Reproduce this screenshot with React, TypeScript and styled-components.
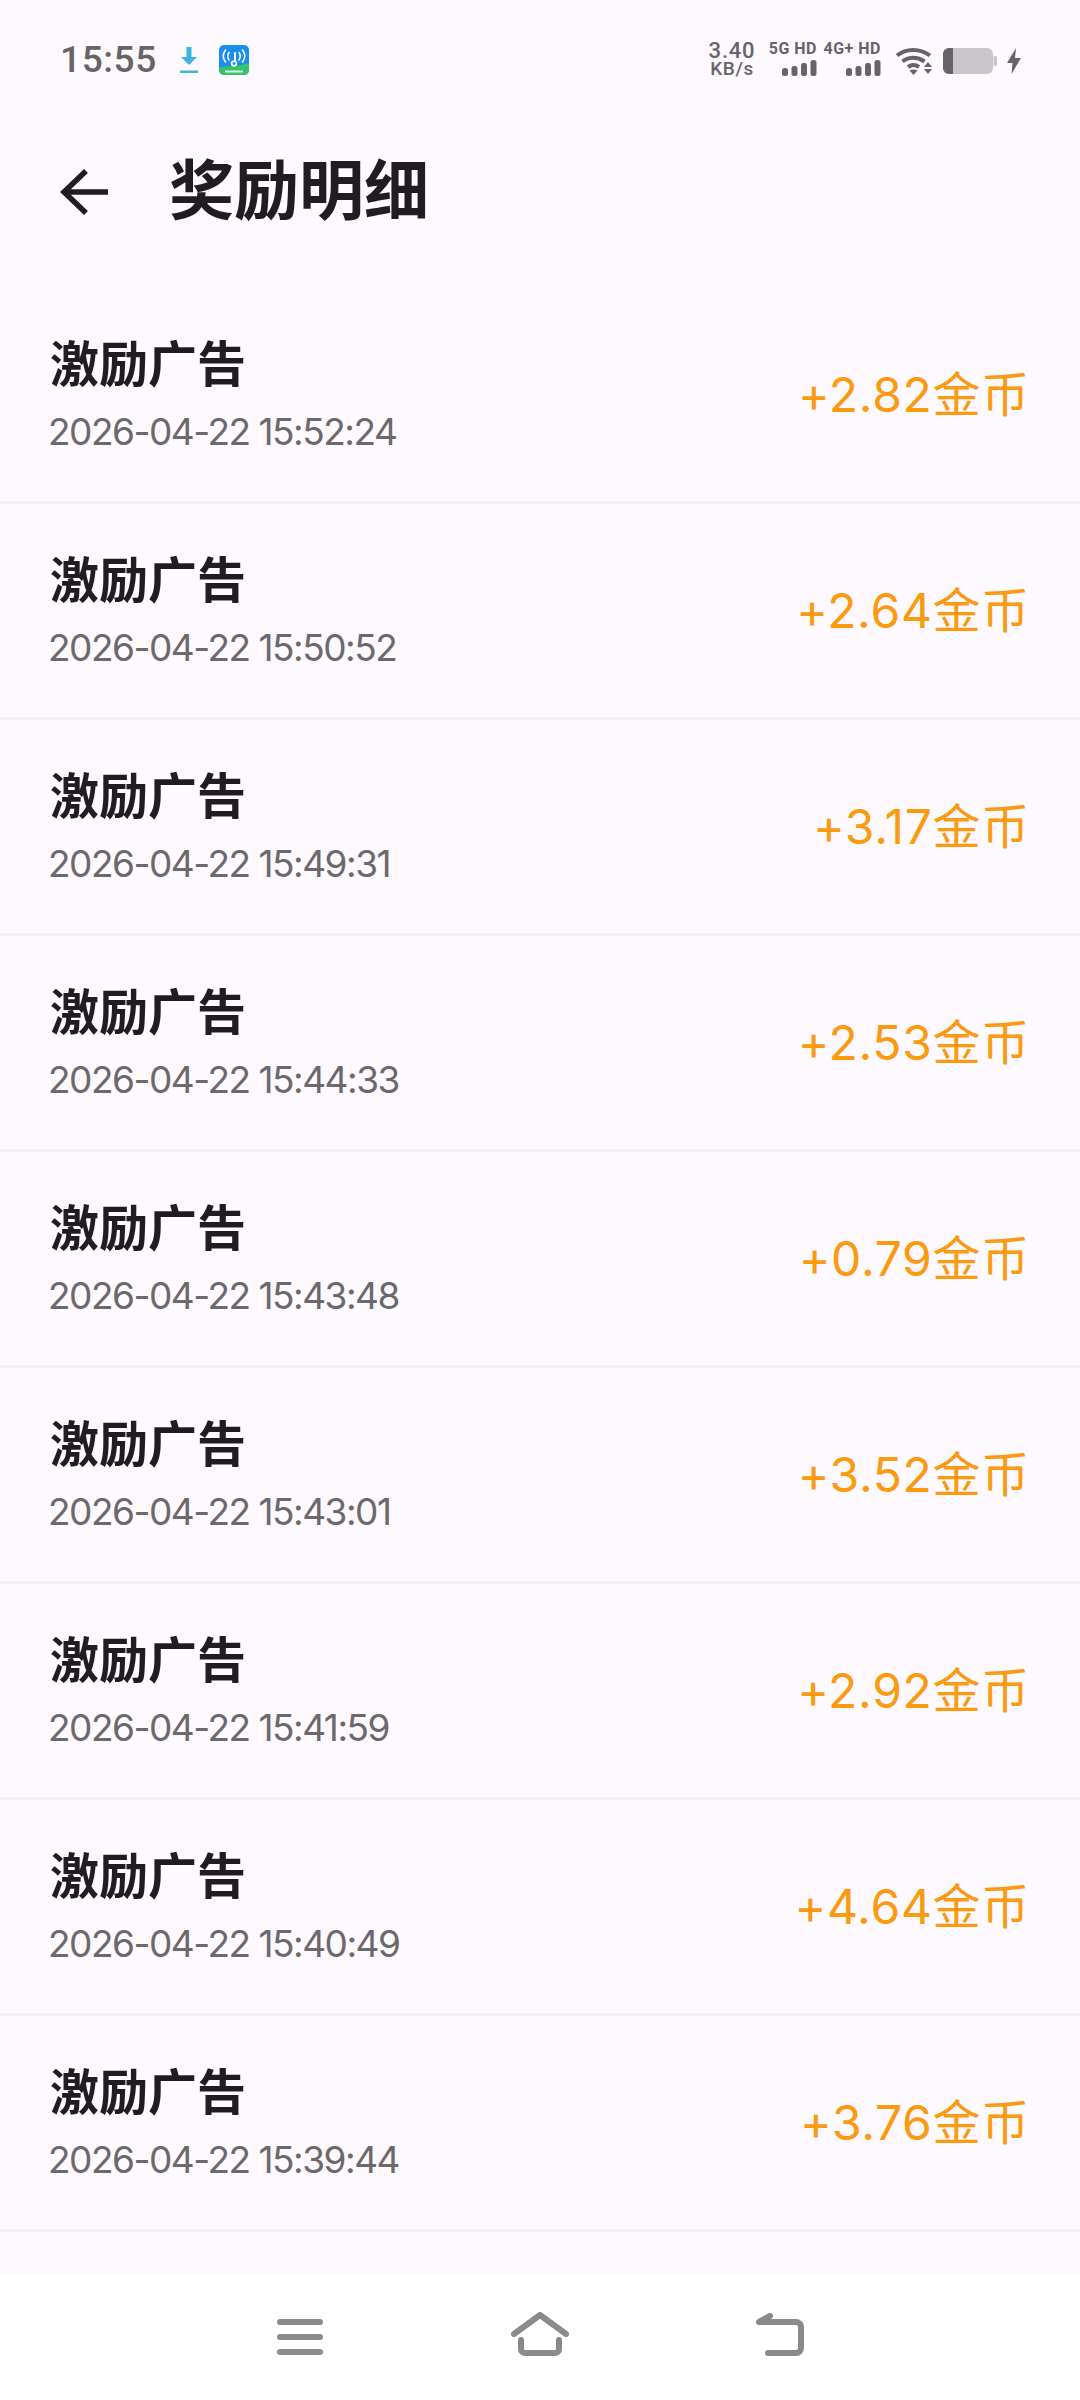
import React from "react";
import styled, { createGlobalStyle } from "styled-components";

const cjk = `Roboto, "Noto Sans CJK SC", sans-serif`;
const numeric = `Inter, "Noto Sans CJK SC", sans-serif`;

const GlobalStyle = createGlobalStyle`
  html, body {
    margin: 0;
    padding: 0;
    background: #fef8ff;
  }
  * {
    box-sizing: border-box;
  }
`;

const Page = styled.div`
  width: 1080px;
  height: 2400px;
  display: flex;
  flex-direction: column;
  overflow: hidden;
  background: #fef8ff;
  font-family: ${cjk};
`;

const StatusBar = styled.div`
  height: 80px;
  padding: 40px 59px 0 60px;
  display: flex;
  align-items: flex-start;
  justify-content: space-between;
  color: #666467;
`;

const StatusLeft = styled.div`
  display: flex;
  align-items: center;
  height: 40px;
`;

const Clock = styled.span`
  font-size: 37px;
  font-weight: 500;
  line-height: 40px;
  letter-spacing: 0.6px;
  margin-right: 22px;
`;

const StatusRight = styled.div`
  display: flex;
  align-items: flex-start;
  height: 40px;
`;

const Speed = styled.div`
  width: 50px;
  margin-top: 1px;
  margin-right: 12px;
  display: flex;
  flex-direction: column;
  align-items: center;
`;

const SpeedValue = styled.span`
  font-size: 22px;
  font-weight: 500;
  line-height: 20px;
  letter-spacing: 0.8px;
`;

const SpeedUnit = styled.span`
  font-size: 19px;
  font-weight: 500;
  line-height: 16px;
  letter-spacing: 0.6px;
`;

const Network = styled.div<{ $width: number; $after: number }>`
  width: ${(p) => p.$width}px;
  margin-right: ${(p) => p.$after}px;
  display: flex;
  flex-direction: column;
  align-items: flex-end;
  gap: 3px;
`;

const NetworkLabel = styled.span`
  font-size: 16px;
  font-weight: 700;
  line-height: 17px;
  letter-spacing: 0.5px;
  white-space: nowrap;
`;

const Header = styled.div`
  height: 126px;
  margin-top: 49px;
  padding: 0 0 0 60px;
  display: flex;
  align-items: center;
  gap: 61px;
  color: #1f1d20;
`;

const Title = styled.h1`
  margin: 0;
  font-size: 65px;
  font-weight: 700;
  line-height: 72px;
  color: #1f1d20;
`;

const List = styled.div`
  flex: 1;
  margin-top: 33px;
  overflow: hidden;
`;

const Row = styled.div`
  height: 216px;
  padding: 0 50px 0 48px;
  display: flex;
  align-items: center;
  justify-content: space-between;
  border-bottom: 3px solid #f3f1f4;
`;

const RowText = styled.div`
  padding-top: 2px;
  display: flex;
  flex-direction: column;
  gap: 15px;
`;

const RowTitle = styled.div`
  margin-left: 2px;
  font-size: 49px;
  font-weight: 700;
  line-height: 58px;
  color: #1f1d20;
`;

const RowTime = styled.div`
  font-family: ${numeric};
  font-size: 37px;
  line-height: 44px;
  letter-spacing: -1.5px;
  color: #6b696c;
`;

const Amount = styled.div`
  font-family: ${numeric};
  font-size: 48px;
  line-height: 56px;
  letter-spacing: 0.7px;
  color: #fb9a0e;
`;

const BottomNav = styled.div`
  height: 126px;
  padding: 45px 0 0;
  background: #ffffff;
  display: flex;
  justify-content: center;
  align-items: flex-start;
  color: #8a8a8a;
`;

const NavSlot = styled.div`
  width: 240px;
  display: flex;
  justify-content: center;
`;

const records = [
  { time: "2026-04-22 15:52:24", amount: "+2.82" },
  { time: "2026-04-22 15:50:52", amount: "+2.64" },
  { time: "2026-04-22 15:49:31", amount: "+3.17" },
  { time: "2026-04-22 15:44:33", amount: "+2.53" },
  { time: "2026-04-22 15:43:48", amount: "+0.79" },
  { time: "2026-04-22 15:43:01", amount: "+3.52" },
  { time: "2026-04-22 15:41:59", amount: "+2.92" },
  { time: "2026-04-22 15:40:49", amount: "+4.64" },
  { time: "2026-04-22 15:39:44", amount: "+3.76" },
];

const DownloadIcon = () => (
  <svg width="20" height="28" viewBox="0 0 20 28" style={{ marginRight: 20 }}>
    <path d="M7.5 1h5v10h5.500L10 19 2 11h5.500z" fill="#3bb4e0" />
    <rect x="1" y="24.500" width="18" height="2.500" fill="#3bb4e0" />
  </svg>
);

const AppIcon = () => (
  <svg width="30" height="30" viewBox="0 0 30 30">
    <defs>
      <clipPath id="appClip">
        <rect width="30" height="30" rx="5" />
      </clipPath>
    </defs>
    <g clipPath="url(#appClip)">
      <rect width="30" height="30" fill="#1a8df0" />
      <path d="M0 23c8-3 20-1 30-5v12H0z" fill="#36c46a" />
      <g fill="none" stroke="#fff" strokeWidth="1.600" strokeLinecap="round">
        <path d="M6.500 5c-3 4-3 8 0 12M23.500 5c3 4 3 8 0 12" />
        <path d="M10 7.500c-1.700 2.500-1.700 5 0 7.500M20 7.500c1.700 2.500 1.700 5 0 7.500" />
        <path d="M16 8v8" strokeWidth="2" />
        <circle cx="15" cy="18.500" r="2.300" strokeWidth="1.800" />
      </g>
      <rect x="6" y="25.500" width="18" height="2" fill="#d8f5e0" />
    </g>
  </svg>
);

const SignalBars = () => (
  <svg width="35" height="16" viewBox="0 0 35 16" fill="currentColor">
    <rect x="0" y="8" width="6" height="8" rx="2.500" />
    <rect x="9.500" y="6" width="6" height="10" rx="2.500" />
    <rect x="19" y="3" width="6" height="13" rx="2.500" />
    <rect x="28.500" y="0" width="6" height="16" rx="2.500" />
  </svg>
);

const WifiIcon = () => (
  <svg width="38" height="28" viewBox="0 0 38 28" style={{ marginTop: 7, marginRight: 10 }}>
    <g fill="none" stroke="currentColor" strokeWidth="4">
      <path d="M2 8.500C11 1 25 1 35 8.500" />
      <path d="M7.500 14.500c6.500-5 15-5 22 0" />
      <path d="M13 20c3.500-2.500 7.500-2.500 11 0" />
    </g>
    <path d="M14.500 23.500c2.500-1.500 5-1.500 8 0L18.500 28z" fill="currentColor" />
    <path d="M33 15l4 5h-8zM29 22h8l-4 5z" fill="currentColor" />
  </svg>
);

const BatteryIcon = () => (
  <svg width="54" height="26" viewBox="0 0 54 26" style={{ marginTop: 8, marginRight: 10 }}>
    <rect x="0" y="0" width="50" height="26" rx="6" fill="#c9c5ca" />
    <path d="M6 0h4v26H6a6 6 0 0 1-6-6V6a6 6 0 0 1 6-6z" fill="#666467" />
    <rect x="50.500" y="8" width="3.500" height="10" rx="1.500" fill="#c9c5ca" />
  </svg>
);

const BoltIcon = () => (
  <svg width="14" height="26" viewBox="0 0 14 26" fill="currentColor" style={{ marginTop: 8 }}>
    <path d="M9 0 0 15h5.500L4.500 26 14 10H8z" />
  </svg>
);

const BackArrow = () => (
  <svg width="48" height="48" viewBox="0 0 48 48">
    <path
      d="M48 24H4M26 3 4 24l22 21"
      fill="none"
      stroke="currentColor"
      strokeWidth="5.500"
    />
  </svg>
);

const MenuIcon = () => (
  <svg width="46" height="36" viewBox="0 0 46 36" fill="currentColor">
    <rect x="0" y="0" width="46" height="6" rx="3" />
    <rect x="0" y="15" width="46" height="6" rx="3" />
    <rect x="0" y="30" width="46" height="6" rx="3" />
  </svg>
);

const HomeIcon = () => (
  <svg width="58" height="44" viewBox="0 0 58 44" style={{ marginTop: -7 }}>
    <path
      d="M3 22 29 3l26 19M10 28v9a4 4 0 0 0 4 4h30a4 4 0 0 0 4-4v-9"
      fill="none"
      stroke="currentColor"
      strokeWidth="6"
      strokeLinecap="round"
      strokeLinejoin="round"
    />
  </svg>
);

const ReturnIcon = () => (
  <svg width="48" height="44" viewBox="0 0 48 44" style={{ marginTop: -6 }}>
    <path
      d="M12 40h28a5 5 0 0 0 5-5V14a5 5 0 0 0-5-5H3l11-6"
      fill="none"
      stroke="currentColor"
      strokeWidth="6"
      strokeLinecap="round"
      strokeLinejoin="round"
    />
  </svg>
);

const App = () => {
  return (
    <Page>
      <GlobalStyle />
      <StatusBar>
        <StatusLeft>
          <Clock>15:55</Clock>
          <DownloadIcon />
          <AppIcon />
        </StatusLeft>
        <StatusRight>
          <Speed>
            <SpeedValue>3.40</SpeedValue>
            <SpeedUnit>KB/s</SpeedUnit>
          </Speed>
          <Network $width={48} $after={6}>
            <NetworkLabel>5G HD</NetworkLabel>
            <SignalBars />
          </Network>
          <Network $width={58} $after={14}>
            <NetworkLabel>4G+ HD</NetworkLabel>
            <SignalBars />
          </Network>
          <WifiIcon />
          <BatteryIcon />
          <BoltIcon />
        </StatusRight>
      </StatusBar>
      <Header>
        <BackArrow />
        <Title>奖励明细</Title>
      </Header>
      <List>
        {records.map((r) => (
          <Row key={r.time}>
            <RowText>
              <RowTitle>激励广告</RowTitle>
              <RowTime>{r.time}</RowTime>
            </RowText>
            <Amount>{r.amount}金币</Amount>
          </Row>
        ))}
      </List>
      <BottomNav>
        <NavSlot>
          <MenuIcon />
        </NavSlot>
        <NavSlot>
          <HomeIcon />
        </NavSlot>
        <NavSlot>
          <ReturnIcon />
        </NavSlot>
      </BottomNav>
    </Page>
  );
};

export default App;
